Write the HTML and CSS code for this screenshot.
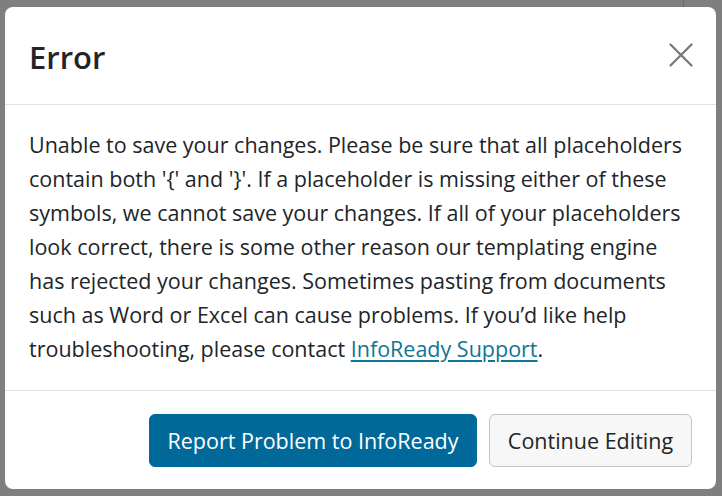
FILE: index.html
```html
<!DOCTYPE html>
<html>
<head>
<meta charset="utf-8">
<link rel="stylesheet" href="styles.css">
</head>
<body>
<div class="backdrop">
  <div class="bg-line-top"></div>
  <div class="modal">
    <div class="modal-header">
      <h1 class="modal-title">Error</h1>
      <button class="close" aria-label="Close">
        <svg width="24" height="24" viewBox="0 0 24 24"><path d="M1.5 1.5L22.5 22.5M22.5 1.5L1.5 22.5" stroke="#777" stroke-width="2.2" stroke-linecap="round" fill="none"/></svg>
      </button>
    </div>
    <div class="modal-body">
      <p>Unable to save your changes. Please be sure that all placeholders<br>contain both '{' and '}'. If a placeholder is missing either of these<br>symbols, we cannot save your changes. If all of your placeholders<br>look correct, there is some other reason our templating engine<br>has rejected your changes. Sometimes pasting from documents<br>such as Word or Excel can cause problems. If you’d like help<br>troubleshooting, please contact <a href="#">InfoReady Support</a>.</p>
    </div>
    <div class="modal-footer">
      <button class="btn btn-primary">Report Problem to InfoReady</button>
      <button class="btn btn-secondary">Continue Editing</button>
    </div>
  </div>
</div>
</body>
</html>
```
FILE: styles.css
```css
html, body {
  margin: 0;
  padding: 0;
  background: #7f7f7f;
  font-family: "Open Sans", "Noto Sans", "Liberation Sans", sans-serif;
  color: #212529;
}
.backdrop {
  width: 722px;
  height: 496px;
  padding: 7px 6px 7px 5px;
  box-sizing: border-box;
  position: relative;
}
.bg-line-top {
  position: absolute;
  left: 683px;
  top: 0;
  width: 1px;
  height: 7px;
  background: #6a6a6a;
}
.modal {
  background: #fff;
  border-radius: 8px;
  height: 482px;
  display: flex;
  flex-direction: column;
  overflow: hidden;
}
.modal-header {
  height: 98px;
  box-sizing: border-box;
  border-bottom: 1px solid #dee2e6;
  display: flex;
  align-items: center;
  justify-content: space-between;
  padding: 0 23px 0 24px;
}
.modal-title {
  margin: 0;
  font-size: 31px;
  font-weight: 600;
  line-height: 1;
  padding-top: 3px;
}
.close {
  background: none;
  border: 0;
  padding: 0;
  width: 24px;
  height: 24px;
  display: flex;
  cursor: pointer;
  margin-bottom: 1px;
}
.modal-body {
  flex: 1;
  padding: 23px 24px 0 24px;
  border-bottom: 1px solid #dee2e6;
}
.modal-body p {
  margin: 0;
  font-size: 21.5px;
  line-height: 34px;
  white-space: nowrap;
}
.modal-body a {
  color: #0f7594;
  text-decoration: underline;
  text-underline-offset: 3px;
}
.modal-footer {
  height: 98px;
  box-sizing: border-box;
  display: flex;
  justify-content: flex-end;
  align-items: center;
  gap: 12px;
  padding: 0 24px 0 24px;
}
.btn {
  height: 53px;
  box-sizing: border-box;
  border-radius: 6px;
  font-family: inherit;
  font-size: 21.5px;
  padding: 0 10px;
  cursor: pointer;
  white-space: nowrap;
}
.btn-primary {
  background: #006999;
  color: #fff;
  border: 1px solid #006999;
  width: 328px;
}
.btn-secondary {
  background: #f7f7f7;
  color: #212529;
  border: 1px solid #c4c4c4;
  width: 203px;
}
```
